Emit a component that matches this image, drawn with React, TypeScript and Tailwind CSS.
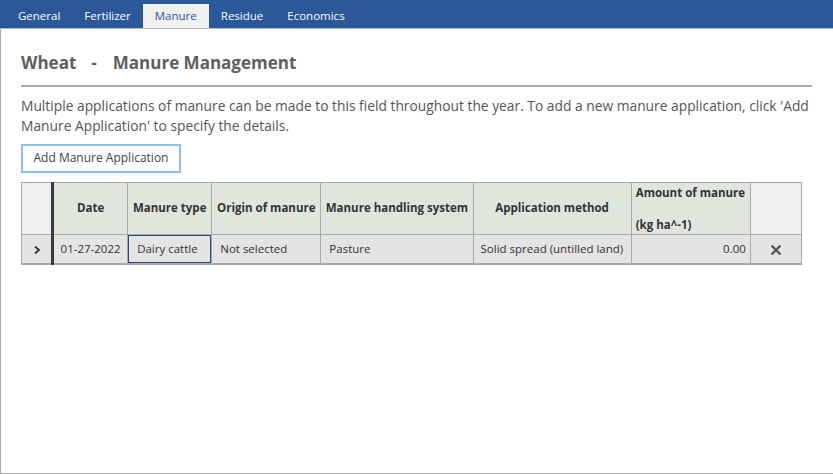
const tabs = ["General", "Fertilizer", "Manure", "Residue", "Economics"];

const cols = [
  { label: "Date", w: "w-[75px]" },
  { label: "Manure type", w: "w-[84px]" },
  { label: "Origin of manure", w: "w-[109px]" },
  { label: "Manure handling system", w: "w-[152px]" },
  { label: "Application method", w: "w-[158px]" },
];

export default function App() {
  return (
    <div
      className="w-[833px] h-[474px] bg-white flex flex-col overflow-hidden"
      style={{ fontFamily: '"Open Sans", "Noto Sans", sans-serif' }}
    >
      <div className="h-[29px] bg-[#2a5899] border-b border-[#b3bccb] flex items-end pl-[6px] shrink-0">
        {tabs.map((t) => (
          <div
            key={t}
            className={
              t === "Manure"
                ? "h-[24px] px-[12px] flex items-center text-[11.5px] bg-[#f0f0f0] text-[#2a5899]"
                : "h-[24px] px-[12px] flex items-center text-[11.5px] text-white"
            }
          >
            {t}
          </div>
        ))}
      </div>

      <div className="flex-1 border-l border-b border-[#acacac] pl-[20px] pr-[20px] pt-[21px]">
        <h1 className="text-[17px] font-bold text-[#5f5f5f] pb-[9px] border-b-2 border-[#acacac] w-[791px] flex">
          <span>Wheat</span>
          <span className="ml-[15px] mr-[16px]">-</span>
          <span>Manure Management</span>
        </h1>

        <p className="mt-[9px] text-[13.8px] leading-[20px] text-[#555] w-[800px]">
          Multiple applications of manure can be made to this field throughout the year. To add a new
          manure application, click 'Add Manure Application' to specify the details.
        </p>

        <button className="mt-[8px] w-[160px] h-[29px] border-2 border-[#8ac0f2] text-[12px] text-[#444] bg-white">
          Add Manure Application
        </button>

        <table className="mt-[9px] w-[781px] table-fixed border-collapse border border-[#a9a9a9] border-b-2 text-[11.5px] text-[#333]">
          <colgroup>
            <col className="w-[31px]" />
            <col className="w-[75px]" />
            <col className="w-[84px]" />
            <col className="w-[109px]" />
            <col className="w-[152px]" />
            <col className="w-[158px]" />
            <col className="w-[119px]" />
            <col className="w-[51px]" />
          </colgroup>
          <thead>
            <tr className="h-[52px]">
              <th className="bg-[#f0f0f0] border-r-[3px] border-r-[#3a3a3a] border-b border-b-[#a9a9a9]"></th>
              {cols.map((c) => (
                <th
                  key={c.label}
                  className="bg-[#dfe7dd] border border-[#a9a9a9] font-bold whitespace-nowrap px-[2px]"
                >
                  {c.label}
                </th>
              ))}
              <th className="bg-[#dfe7dd] border border-[#a9a9a9] font-bold text-left px-[4px] leading-[16px] align-top pt-[2px] whitespace-nowrap">
                <div>Amount of manure</div>
                <div className="mt-[16px]">(kg ha^-1)</div>
              </th>
              <th className="bg-[#f0f0f0] border border-[#a9a9a9]"></th>
            </tr>
          </thead>
          <tbody>
            <tr className="h-[29px] bg-[#e4e4e4]">
              <td className="border-r-[3px] border-r-[#3a3a3a] text-center">
                <svg width="8" height="10" viewBox="0 0 8 10" className="inline-block">
                  <path d="M2 1.5 L6 5 L2 8.5" fill="none" stroke="#333" strokeWidth="1.8" />
                </svg>
              </td>
              <td className="border border-[#a9a9a9] text-center">01-27-2022</td>
              <td className="border border-[#a9a9a9] p-0">
                <div className="h-[28px] border border-[#264a80] flex items-center px-[8px]">Dairy cattle</div>
              </td>
              <td className="border border-[#a9a9a9] px-[8px]">Not selected</td>
              <td className="border border-[#a9a9a9] px-[8px]">Pasture</td>
              <td className="border border-[#a9a9a9] px-[7px] whitespace-nowrap">Solid spread (untilled land)</td>
              <td className="border border-[#a9a9a9] text-right px-[4px]">0.00</td>
              <td className="border border-[#a9a9a9] text-center">
                <svg width="12" height="12" viewBox="0 0 12 12" className="inline-block">
                  <path d="M1.5 1.5 L10.5 10.5 M10.5 1.5 L1.5 10.5" stroke="#555" strokeWidth="2.4" />
                </svg>
              </td>
            </tr>
          </tbody>
        </table>
      </div>
    </div>
  );
}
